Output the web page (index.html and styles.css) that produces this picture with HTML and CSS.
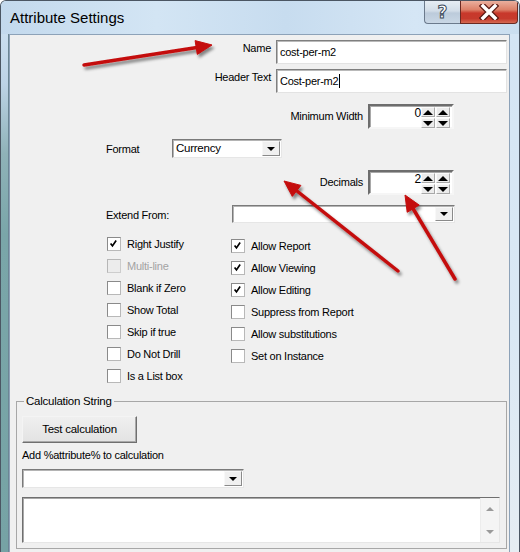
FILE: index.html
```html
<!DOCTYPE html>
<html>
<head>
<meta charset="utf-8">
<link rel="stylesheet" href="styles.css">
</head>
<body>
<div class="window">
  <div class="titlebar">
    <span class="title">Attribute Settings</span>
    <div class="caption-btns">
      <div class="btn-help"><span class="help-glyph">?</span></div>
      <div class="btn-close">
        <svg width="24" height="16" viewBox="0 0 24 16">
          <path d="M6 2 L18 14 M18 2 L6 14" stroke="#5a1a14" stroke-width="6" stroke-linecap="square" fill="none"/>
          <path d="M6 2 L18 14 M18 2 L6 14" stroke="#ffffff" stroke-width="3.5" stroke-linecap="square" fill="none"/>
        </svg>
      </div>
    </div>
  </div>
  <div class="body-row">
    <div class="frame-left"></div>
    <div class="client">
      <div class="row row-name">
        <span class="lbl-r lbl-top">Name</span>
        <div class="textbox">cost-per-m2</div>
      </div>
      <div class="row row-header">
        <span class="lbl-r lbl-top">Header Text</span>
        <div class="textbox">Cost-per-m2<span class="caret"></span></div>
      </div>
      <div class="row row-spin row-minw">
        <span class="lbl-spin">Minimum Width</span>
        <div class="spin">
          <div class="spin-val">0</div>
          <div class="spin-btns">
            <span class="sb up"></span><span class="sb up"></span>
            <span class="sb down"></span><span class="sb down"></span>
          </div>
        </div>
      </div>
      <div class="row row-format">
        <span class="lbl-format">Format</span>
        <div class="combo combo-format">
          <span class="combo-text">Currency</span>
          <span class="combo-btn"><span class="tri-down"></span></span>
        </div>
      </div>
      <div class="row row-spin row-dec">
        <span class="lbl-spin">Decimals</span>
        <div class="spin">
          <div class="spin-val">2</div>
          <div class="spin-btns">
            <span class="sb up"></span><span class="sb up"></span>
            <span class="sb down"></span><span class="sb down"></span>
          </div>
        </div>
      </div>
      <div class="row row-extend">
        <span class="lbl-extend">Extend From:</span>
        <div class="combo combo-extend">
          <span class="combo-text"></span>
          <span class="combo-btn"><span class="tri-down"></span></span>
        </div>
      </div>
      <div class="checks">
        <div class="col col-left">
          <div class="cb"><span class="box"><svg viewBox="0 0 14 14" width="12" height="12"><path d="M3 6.5 L5.2 9.2 L9.5 3" stroke="#000" stroke-width="2" fill="none"/></svg></span><span>Right Justify</span></div>
          <div class="cb disabled"><span class="box"></span><span>Multi-line</span></div>
          <div class="cb"><span class="box"></span><span>Blank if Zero</span></div>
          <div class="cb"><span class="box"></span><span>Show Total</span></div>
          <div class="cb"><span class="box"></span><span>Skip if true</span></div>
          <div class="cb"><span class="box"></span><span>Do Not Drill</span></div>
          <div class="cb"><span class="box"></span><span>Is a List box</span></div>
        </div>
        <div class="col col-right">
          <div class="cb"><span class="box"><svg viewBox="0 0 14 14" width="12" height="12"><path d="M3 6.5 L5.2 9.2 L9.5 3" stroke="#000" stroke-width="2" fill="none"/></svg></span><span>Allow Report</span></div>
          <div class="cb"><span class="box"><svg viewBox="0 0 14 14" width="12" height="12"><path d="M3 6.5 L5.2 9.2 L9.5 3" stroke="#000" stroke-width="2" fill="none"/></svg></span><span>Allow Viewing</span></div>
          <div class="cb"><span class="box"><svg viewBox="0 0 14 14" width="12" height="12"><path d="M3 6.5 L5.2 9.2 L9.5 3" stroke="#000" stroke-width="2" fill="none"/></svg></span><span>Allow Editing</span></div>
          <div class="cb"><span class="box"></span><span>Suppress from Report</span></div>
          <div class="cb"><span class="box"></span><span>Allow substitutions</span></div>
          <div class="cb"><span class="box"></span><span>Set on Instance</span></div>
        </div>
      </div>
      <fieldset class="group">
        <legend>Calculation String</legend>
        <div class="button">Test calculation</div>
        <div class="add-lbl">Add %attribute% to calculation</div>
        <div class="combo combo-attr">
          <span class="combo-text"></span>
          <span class="combo-btn"><span class="tri-down"></span></span>
        </div>
        <div class="textarea">
          <div class="ta-text"></div>
          <div class="scrollbar">
            <span class="sc-up"></span>
            <span class="sc-down"></span>
          </div>
        </div>
      </fieldset>
    </div>
    <div class="frame-right"></div>
  </div>
  <svg class="arrows" width="520" height="552" viewBox="0 0 520 552">
    <defs>
      <filter id="sh" x="-20%" y="-20%" width="140%" height="140%">
        <feDropShadow dx="2" dy="3" stdDeviation="1.6" flood-color="#000" flood-opacity="0.45"/>
      </filter>
    </defs>
    <g filter="url(#sh)" fill="#c40d0d" stroke="#c40d0d">
      <line x1="84" y1="65" x2="197" y2="47.5" stroke-width="3.5" stroke-linecap="round"/>
      <polygon points="212,45 197.3,54.4 195.1,40.6" stroke-width="1"/>
      <line x1="398" y1="271" x2="297" y2="191" stroke-width="3.5" stroke-linecap="round"/>
      <polygon points="284,181 300.9,185.4 292.3,196.4" stroke-width="1"/>
      <line x1="455" y1="279" x2="413" y2="208.5" stroke-width="3.5" stroke-linecap="round"/>
      <polygon points="405,195 419.2,205.1 407.2,212.3" stroke-width="1"/>
    </g>
  </svg>
</div>
</body>
</html>
```

FILE: styles.css
```css
* { box-sizing: border-box; }
body {
  margin: 0;
  width: 520px;
  height: 552px;
  overflow: hidden;
  font-family: "Liberation Sans", Arial, sans-serif;
  font-size: 11px;
  letter-spacing: -0.25px;
  color: #000;
  background: #ffffff;
}
.window {
  position: relative;
  width: 520px;
  height: 552px;
  border: 1px solid #4b5663;
  border-bottom: none;
  border-radius: 6px 6px 0 0;
  overflow: hidden;
  display: flex;
  flex-direction: column;
  background: #cfe1f1;
}
.titlebar {
  height: 33px;
  flex: none;
  display: flex;
  justify-content: space-between;
  align-items: flex-start;
  background: linear-gradient(to right, #c3d9ed 0%, #d3e5f4 30%, #c7dcef 55%, #d5e6f5 80%, #cadeef 100%);
}
.title {
  padding: 7px 0 0 9px;
  font-size: 15px;
  line-height: 20px;
  letter-spacing: 0;
  color: #000;
}
.caption-btns {
  display: flex;
  margin-right: 1px;
}
.btn-help {
  width: 36px;
  height: 23px;
  border: 1px solid #6b7a8c;
  border-top: none;
  border-right: none;
  border-radius: 0 0 0 4px;
  background: linear-gradient(to bottom, #e6edf4 0%, #d2dde8 45%, #bccbdb 55%, #c9d7e5 100%);
  display: flex;
  align-items: center;
  justify-content: center;
}
.help-glyph {
  font-family: "DejaVu Sans", sans-serif;
  font-weight: bold;
  font-size: 17px;
  line-height: 18px;
  letter-spacing: 0;
  color: #fff;
  -webkit-text-stroke: 1px #3c4a5a;
  margin-top: -1px;
}
.btn-close {
  width: 58px;
  height: 23px;
  border: 1px solid #6b2a22;
  border-top: none;
  border-radius: 0 0 4px 0;
  background: linear-gradient(to bottom, #eab09e 0%, #dc8068 40%, #c8382b 55%, #c63a2c 80%, #d56a52 100%);
  display: flex;
  align-items: center;
  justify-content: center;
}
.body-row {
  flex: 1;
  display: flex;
}
.frame-left {
  width: 8px;
  flex: none;
  background: linear-gradient(to bottom, #cadeef 0px, #bdd3e6 50px, #8fb2b8 120px, #7aa6a9 200px, #76a3a5 100%);
  border-right: 1px solid #6c8694;
}
.frame-right {
  width: 9px;
  flex: none;
  background: linear-gradient(to bottom, #d4e5f4 0, #dae8f4 300px, #e6edf3 100%);
}
.client {
  width: 501px;
  flex: none;
  background: #f0f0f0;
  border: 1px solid #8da2b8;
  border-bottom: none;
}
.row {
  display: flex;
}
.lbl-r {
  width: 261px;
  margin-right: 5px;
  text-align: right;
  line-height: 13px;
}
.lbl-top { padding-top: 2px; }
.row-name { margin-top: 5px; }
.row-header { margin-top: 5px; }
.textbox {
  width: 231px;
  height: 24px;
  background: #fff;
  border: 1px solid;
  border-color: #7f7f7f #e3e3e3 #e3e3e3 #7f7f7f;
  box-shadow: inset 1px 1px 0 #b9b9b9;
  padding: 4px 0 0 3px;
  line-height: 14px;
  display: flex;
  align-items: flex-start;
}
.caret {
  display: inline-block;
  width: 1px;
  height: 14px;
  background: #000;
  margin-left: 1px;
}
.row-spin { align-items: center; }
.row-minw { margin-top: 11px; }
.row-dec { margin-top: 12px; }
.lbl-spin {
  width: 353px;
  margin-right: 5px;
  text-align: right;
  line-height: 13px;
}
.spin {
  width: 86px;
  height: 25px;
  background: #fff;
  border: 2px solid;
  border-color: #6d6d6d #f6f6f6 #f6f6f6 #6d6d6d;
  box-shadow: inset 1px 1px 0 #a8a8a8;
  display: flex;
}
.spin-val {
  width: 51px;
  text-align: right;
  padding-top: 1px;
  line-height: 13px;
  font-size: 12px;
}
.spin-btns {
  display: grid;
  grid-template-columns: 14px 14px;
  grid-template-rows: 10px 10px;
  column-gap: 1px;
  row-gap: 1px;
  padding-top: 1px;
}
.sb {
  background: #ececec;
  border: 1px solid;
  border-color: #fafafa #a8a8a8 #a8a8a8 #fafafa;
  display: flex;
  align-items: center;
  justify-content: center;
}
.sb.up::after {
  content: "";
  border-left: 5px solid transparent;
  border-right: 5px solid transparent;
  border-bottom: 5px solid #000;
}
.sb.down::after {
  content: "";
  border-left: 5px solid transparent;
  border-right: 5px solid transparent;
  border-top: 5px solid #000;
}
.row-format {
  margin-top: 10px;
  align-items: center;
}
.lbl-format {
  margin-left: 96px;
  width: 66px;
  line-height: 13px;
  padding-top: 2px;
}
.combo {
  height: 19px;
  background: #fff;
  border: 1px solid;
  border-color: #7a7a7a #e6e6e6 #e6e6e6 #7a7a7a;
  box-shadow: inset 1px 1px 0 #b4b4b4;
  display: flex;
  align-items: stretch;
  padding: 1px 1px 1px 1px;
}
.combo-text {
  flex: 1;
  padding-left: 2px;
  line-height: 15px;
  font-size: 11.5px;
}
.combo-btn {
  width: 18px;
  background: #f0f0f0;
  border: 1px solid;
  border-color: #f8f8f8 #8a8a8a #8a8a8a #f8f8f8;
  display: flex;
  align-items: center;
  justify-content: center;
}
.tri-down {
  width: 0;
  height: 0;
  border-left: 4px solid transparent;
  border-right: 4px solid transparent;
  border-top: 4px solid #000;
}
.combo-format { width: 110px; }
.row-extend {
  margin-top: 10px;
  align-items: center;
}
.lbl-extend {
  margin-left: 96px;
  width: 126px;
  line-height: 13px;
  padding-top: 2px;
}
.combo-extend { width: 223px; height: 18px; }
.checks {
  display: flex;
  margin-top: 10px;
  margin-left: 97px;
}
.col-left { width: 124px; }
.col-right { padding-top: 2px; }
.cb {
  height: 22px;
  display: flex;
  align-items: center;
  line-height: 13px;
}
.box {
  width: 14px;
  height: 14px;
  flex: none;
  margin-right: 6px;
  background: #fff;
  border: 1px solid;
  border-color: #8a8a8a #b8b8b8 #b8b8b8 #8a8a8a;
  display: flex;
  align-items: center;
  justify-content: center;
}
.cb.disabled { color: #a3a3a3; }
.cb.disabled .box {
  background: #ececec;
  border-color: #b6b6b6 #cdcdcd #cdcdcd #b6b6b6;
}
.group {
  margin: 7px 0 0 6px;
  width: 491px;
  border: 1px solid #a7a7a7;
  padding: 8px 5px 5px 5px;
}
.group legend {
  margin-left: 2px;
  padding: 0 2px;
  line-height: 14px;
  font-size: 11.5px;
}
.button {
  width: 115px;
  height: 27px;
  border: 1px solid;
  border-color: #f4f4f4 #6f6f6f #6f6f6f #f4f4f4;
  box-shadow: inset -1px -1px 0 #a9a9a9;
  background: linear-gradient(to bottom, #efefef, #e3e3e3);
  text-align: center;
  line-height: 24px;
  font-size: 11.5px;
}
.add-lbl {
  margin-top: 6px;
  line-height: 13px;
}
.combo-attr {
  margin-top: 7px;
  width: 222px;
}
.textarea {
  margin-top: 9px;
  width: 478px;
  height: 46px;
  background: #fff;
  border: 1px solid;
  border-color: #6f6f6f #e6e6e6 #e6e6e6 #6f6f6f;
  box-shadow: inset 1px 1px 0 #a8a8a8;
  display: flex;
}
.ta-text { flex: 1; }
.scrollbar {
  width: 19px;
  background: #f4f4f4;
  border-left: 1px solid #ececec;
  display: flex;
  flex-direction: column;
  justify-content: space-between;
  align-items: center;
  padding: 9px 0 8px;
}
.sc-up {
  border-left: 4px solid transparent;
  border-right: 4px solid transparent;
  border-bottom: 4px solid #9a9a9a;
}
.sc-down {
  border-left: 4px solid transparent;
  border-right: 4px solid transparent;
  border-top: 4px solid #9a9a9a;
}
.arrows {
  position: absolute;
  left: -1px;
  top: -1px;
  pointer-events: none;
}
```
